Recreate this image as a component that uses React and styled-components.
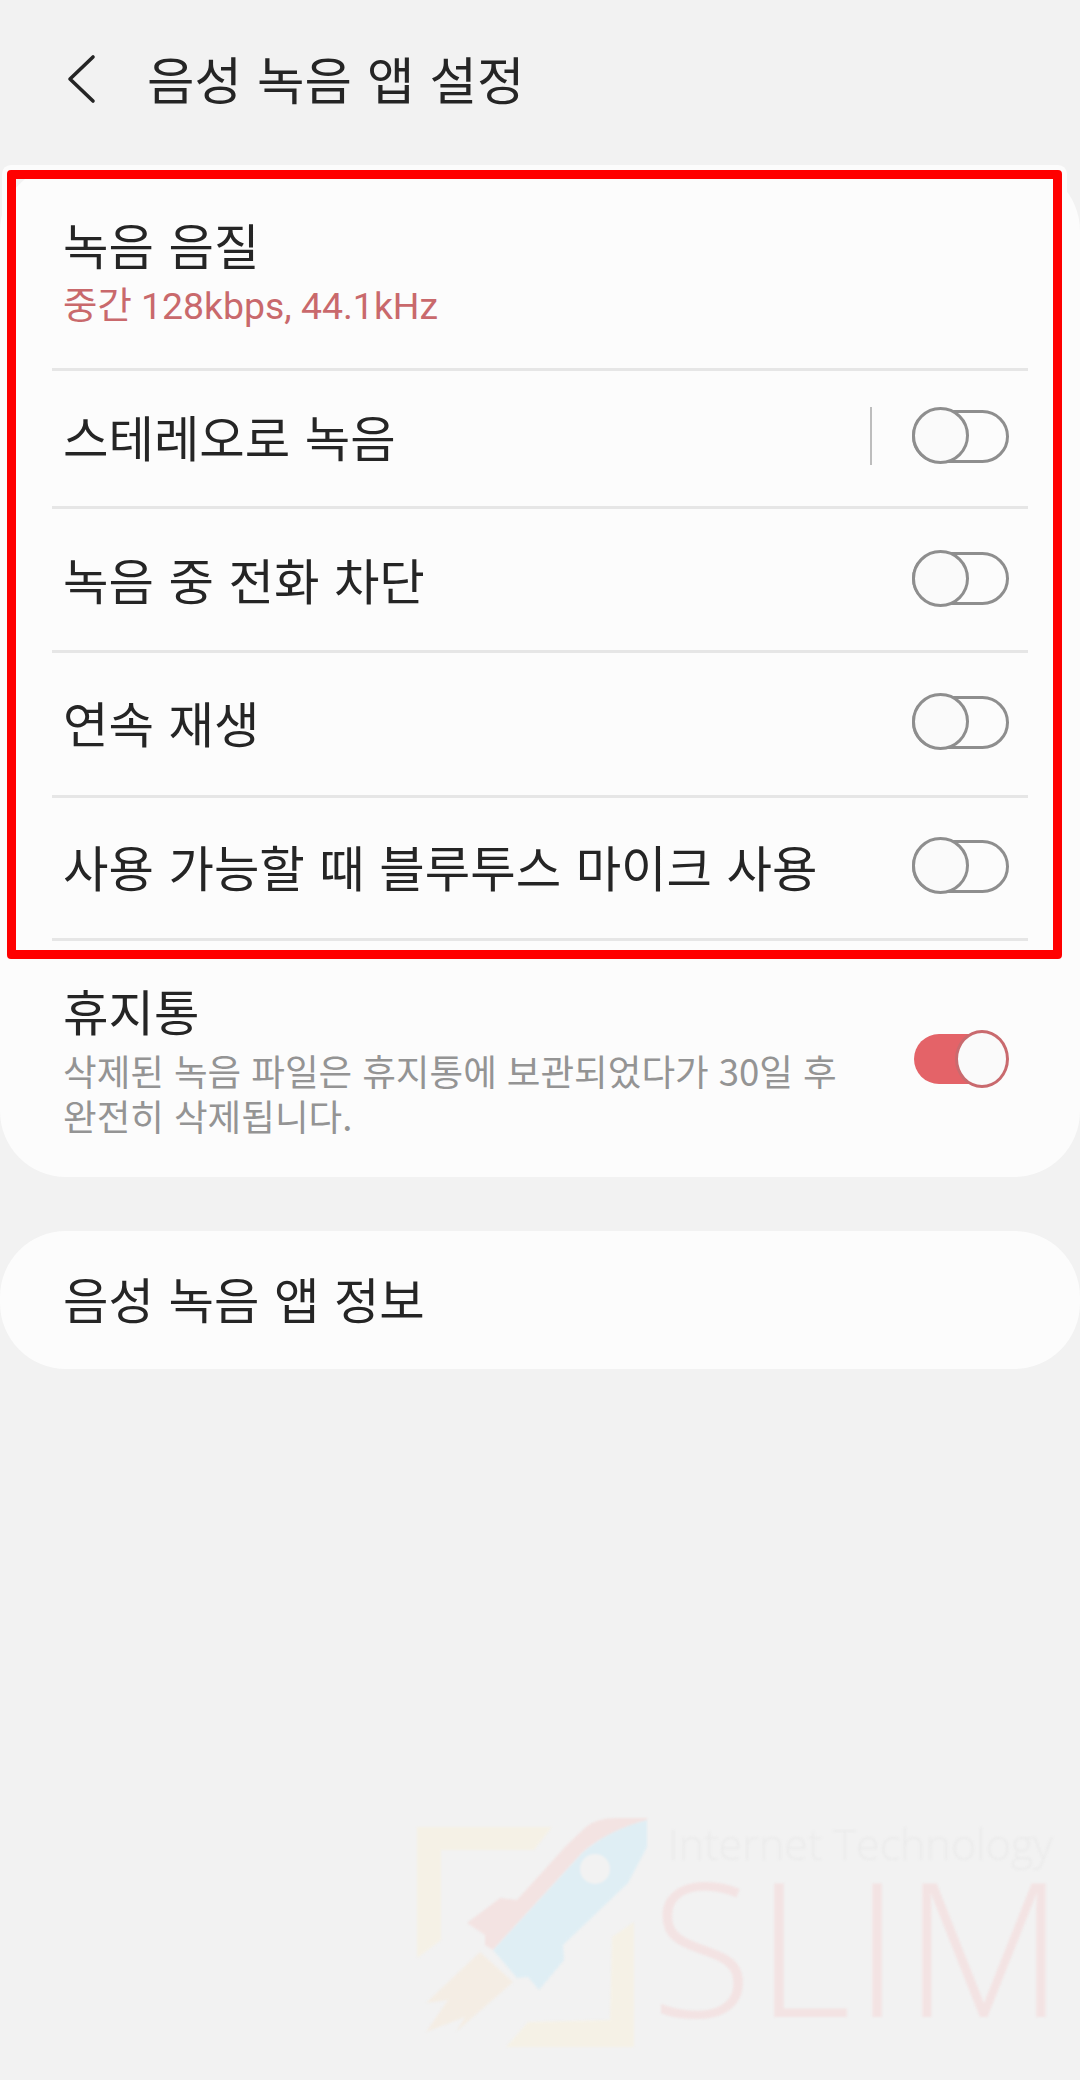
import React from "react";
import styled, { createGlobalStyle } from "styled-components";

const GlobalStyle = createGlobalStyle`
  html, body {
    margin: 0;
    padding: 0;
    background: #f2f2f2;
  }
  * {
    box-sizing: border-box;
  }
`;

const Page = styled.div`
  position: relative;
  width: 1080px;
  height: 2080px;
  overflow: hidden;
  background: #f2f2f2;
  font-family: "Roboto", "Noto Sans CJK KR", sans-serif;
  color: #252525;
`;

const Header = styled.header`
  display: flex;
  align-items: center;
  height: 165px;
  padding: 0 0 8px 66px;
  gap: 51px;
`;

const Title = styled.h1`
  margin: -2px 0 0;
  font-family: "Noto Sans CJK KR", sans-serif;
  font-size: 51.6px;
  font-weight: 400;
  word-spacing: 3.5px;
`;

const Card = styled.section`
  margin-bottom: 54px;
  background: #fcfcfc;
  border-radius: 66px;
`;

const Row = styled.div`
  display: flex;
  align-items: center;
  justify-content: space-between;
  height: ${(p) => p.$height}px;
  margin: 0 52px;
  padding: ${(p) => p.$pad || "0 19px 2px 11px"};
  border-bottom: ${(p) => (p.$last ? "none" : "3px solid #e6e6e6")};
`;

const RowText = styled.div`
  display: flex;
  flex-direction: column;
`;

const Label = styled.div`
  font-family: "Noto Sans CJK KR", sans-serif;
  font-size: 49.4px;
  line-height: 60px;
  word-spacing: 3.5px;
`;

const Value = styled.div`
  margin-top: 9px;
  font-size: 37.4px;
  line-height: 46px;
  color: #c9696c;
`;

const Hint = styled.div`
  margin-top: 8px;
  width: 800px;
  font-family: "Noto Sans CJK KR", sans-serif;
  font-size: 36.6px;
  line-height: 45px;
  word-spacing: 1.8px;
  color: #949494;
`;

const Controls = styled.div`
  display: flex;
  align-items: center;
  gap: 40px;
`;

const VLine = styled.div`
  width: 2px;
  height: 58px;
  background: #bdbdbd;
`;

const Track = styled.div`
  position: relative;
  width: ${(p) => (p.$on ? 86 : 97)}px;
  height: ${(p) => (p.$on ? 50 : 53)}px;
  margin-right: ${(p) => (p.$on ? "9px" : "0")};
  border-radius: 27px;
  border: ${(p) => (p.$on ? "none" : "3.5px solid #8e8e8e")};
  background: ${(p) => (p.$on ? "#e46368" : "transparent")};
`;

const Thumb = styled.div`
  position: absolute;
  top: ${(p) => (p.$on ? "-4px" : "-5.5px")};
  left: ${(p) => (p.$on ? "41px" : "-3.5px")};
  width: ${(p) => (p.$on ? 54 : 57)}px;
  height: ${(p) => (p.$on ? 58 : 57)}px;
  border-radius: 50%;
  border: 3.5px solid ${(p) => (p.$on ? "#c96a6e" : "#8e8e8e")};
  background: #fafafa;
`;

const Annotation = styled.div`
  position: absolute;
  left: 7px;
  top: 170px;
  width: 1055px;
  height: 789px;
  border: 9px solid #ff0000;
  border-radius: 4px;
  box-shadow: 0 0 0 5px #fcfcfc;
  pointer-events: none;
`;

const Watermark = styled.div`
  position: absolute;
  left: 410px;
  top: 1810px;
  width: 660px;
  height: 250px;
  filter: blur(0.8px);
`;

const Mark = styled.svg`
  position: absolute;
  left: 0;
  top: 0;
`;

const WatermarkSmall = styled.div`
  position: absolute;
  left: 258px;
  top: 4px;
  font-family: "Open Sans", sans-serif;
  font-weight: 300;
  font-size: 43px;
  line-height: 60px;
  white-space: nowrap;
  color: #ebebeb;
`;

const WatermarkBig = styled.div`
  position: absolute;
  left: 241px;
  top: 65px;
  font-family: "Open Sans", sans-serif;
  font-weight: 300;
  font-size: 186px;
  line-height: 140px;
  letter-spacing: 3px;
  white-space: nowrap;
  color: #f3e3e3;
`;

function Toggle({ on }) {
  return (
    <Track $on={on}>
      <Thumb $on={on} />
    </Track>
  );
}

function BackIcon() {
  return (
    <svg width="30" height="50" viewBox="0 0 30 50" fill="none">
      <path
        d="M27 3 L4 25 L27 47"
        stroke="#252525"
        strokeWidth="3.6"
        strokeLinecap="round"
        strokeLinejoin="round"
      />
    </svg>
  );
}

function RocketLogo() {
  return (
    <Mark width="250" height="250" viewBox="0 0 250 250">
      <path d="M7 17 H142 L124 40 H31 V130 L7 148 Z" fill="#f5f1e6" />
      <path d="M224 112 V237 H96 L118 212 L200 210 L202 127 Z" fill="#f5f1e6" />
      <path
        d="M237 8 L207 8 Q186 8 176 17 Q165 27 155 37 L107 90 L90 88 L57 113 L75 125 V135 L83 140 L172 43 Q195 22 237 10 Z"
        fill="#f3e3e2"
      />
      <path
        d="M237 10 V37 L218 73 L153 135 L154 150 L129 180 L118 167 L107 168 L83 140 L172 43 Q198 20 237 10 Z"
        fill="#dfeef4"
      />
      <ellipse cx="185" cy="59" rx="15" ry="15" fill="#f2f2f2" />
      <path
        d="M70 142 L103 172 L46 222 L55 207 L16 222 L38 190 L16 193 Z"
        fill="#f4ede4"
      />
    </Mark>
  );
}

export default function App() {
  return (
    <Page>
      <GlobalStyle />
      <Header>
        <BackIcon />
        <Title>음성 녹음 앱 설정</Title>
      </Header>

      <Card>
        <Row $height={206} $pad="10px 19px 0 11px">
          <RowText>
            <Label>녹음 음질</Label>
            <Value>중간 128kbps, 44.1kHz</Value>
          </RowText>
        </Row>
        <Row $height={138} $pad="0 19px 5px 11px">
          <Label>스테레오로 녹음</Label>
          <Controls>
            <VLine />
            <Toggle />
          </Controls>
        </Row>
        <Row $height={144}>
          <Label>녹음 중 전화 차단</Label>
          <Toggle />
        </Row>
        <Row $height={145} $pad="0 19px 4px 11px">
          <Label>연속 재생</Label>
          <Toggle />
        </Row>
        <Row $height={143} $pad="0 19px 4px 11px">
          <Label>사용 가능할 때 블루투스 마이크 사용</Label>
          <Toggle />
        </Row>
        <Row $height={236} $last $pad="0 19px 0 11px">
          <RowText>
            <Label>휴지통</Label>
            <Hint>삭제된 녹음 파일은 휴지통에 보관되었다가 30일 후 완전히 삭제됩니다.</Hint>
          </RowText>
          <Toggle on />
        </Row>
      </Card>

      <Card>
        <Row $height={138} $last $pad="0 19px 4px 11px">
          <Label>음성 녹음 앱 정보</Label>
        </Row>
      </Card>

      <Annotation />

      <Watermark>
        <RocketLogo />
        <WatermarkSmall>Internet Technology</WatermarkSmall>
        <WatermarkBig>SLIM</WatermarkBig>
      </Watermark>
    </Page>
  );
}
